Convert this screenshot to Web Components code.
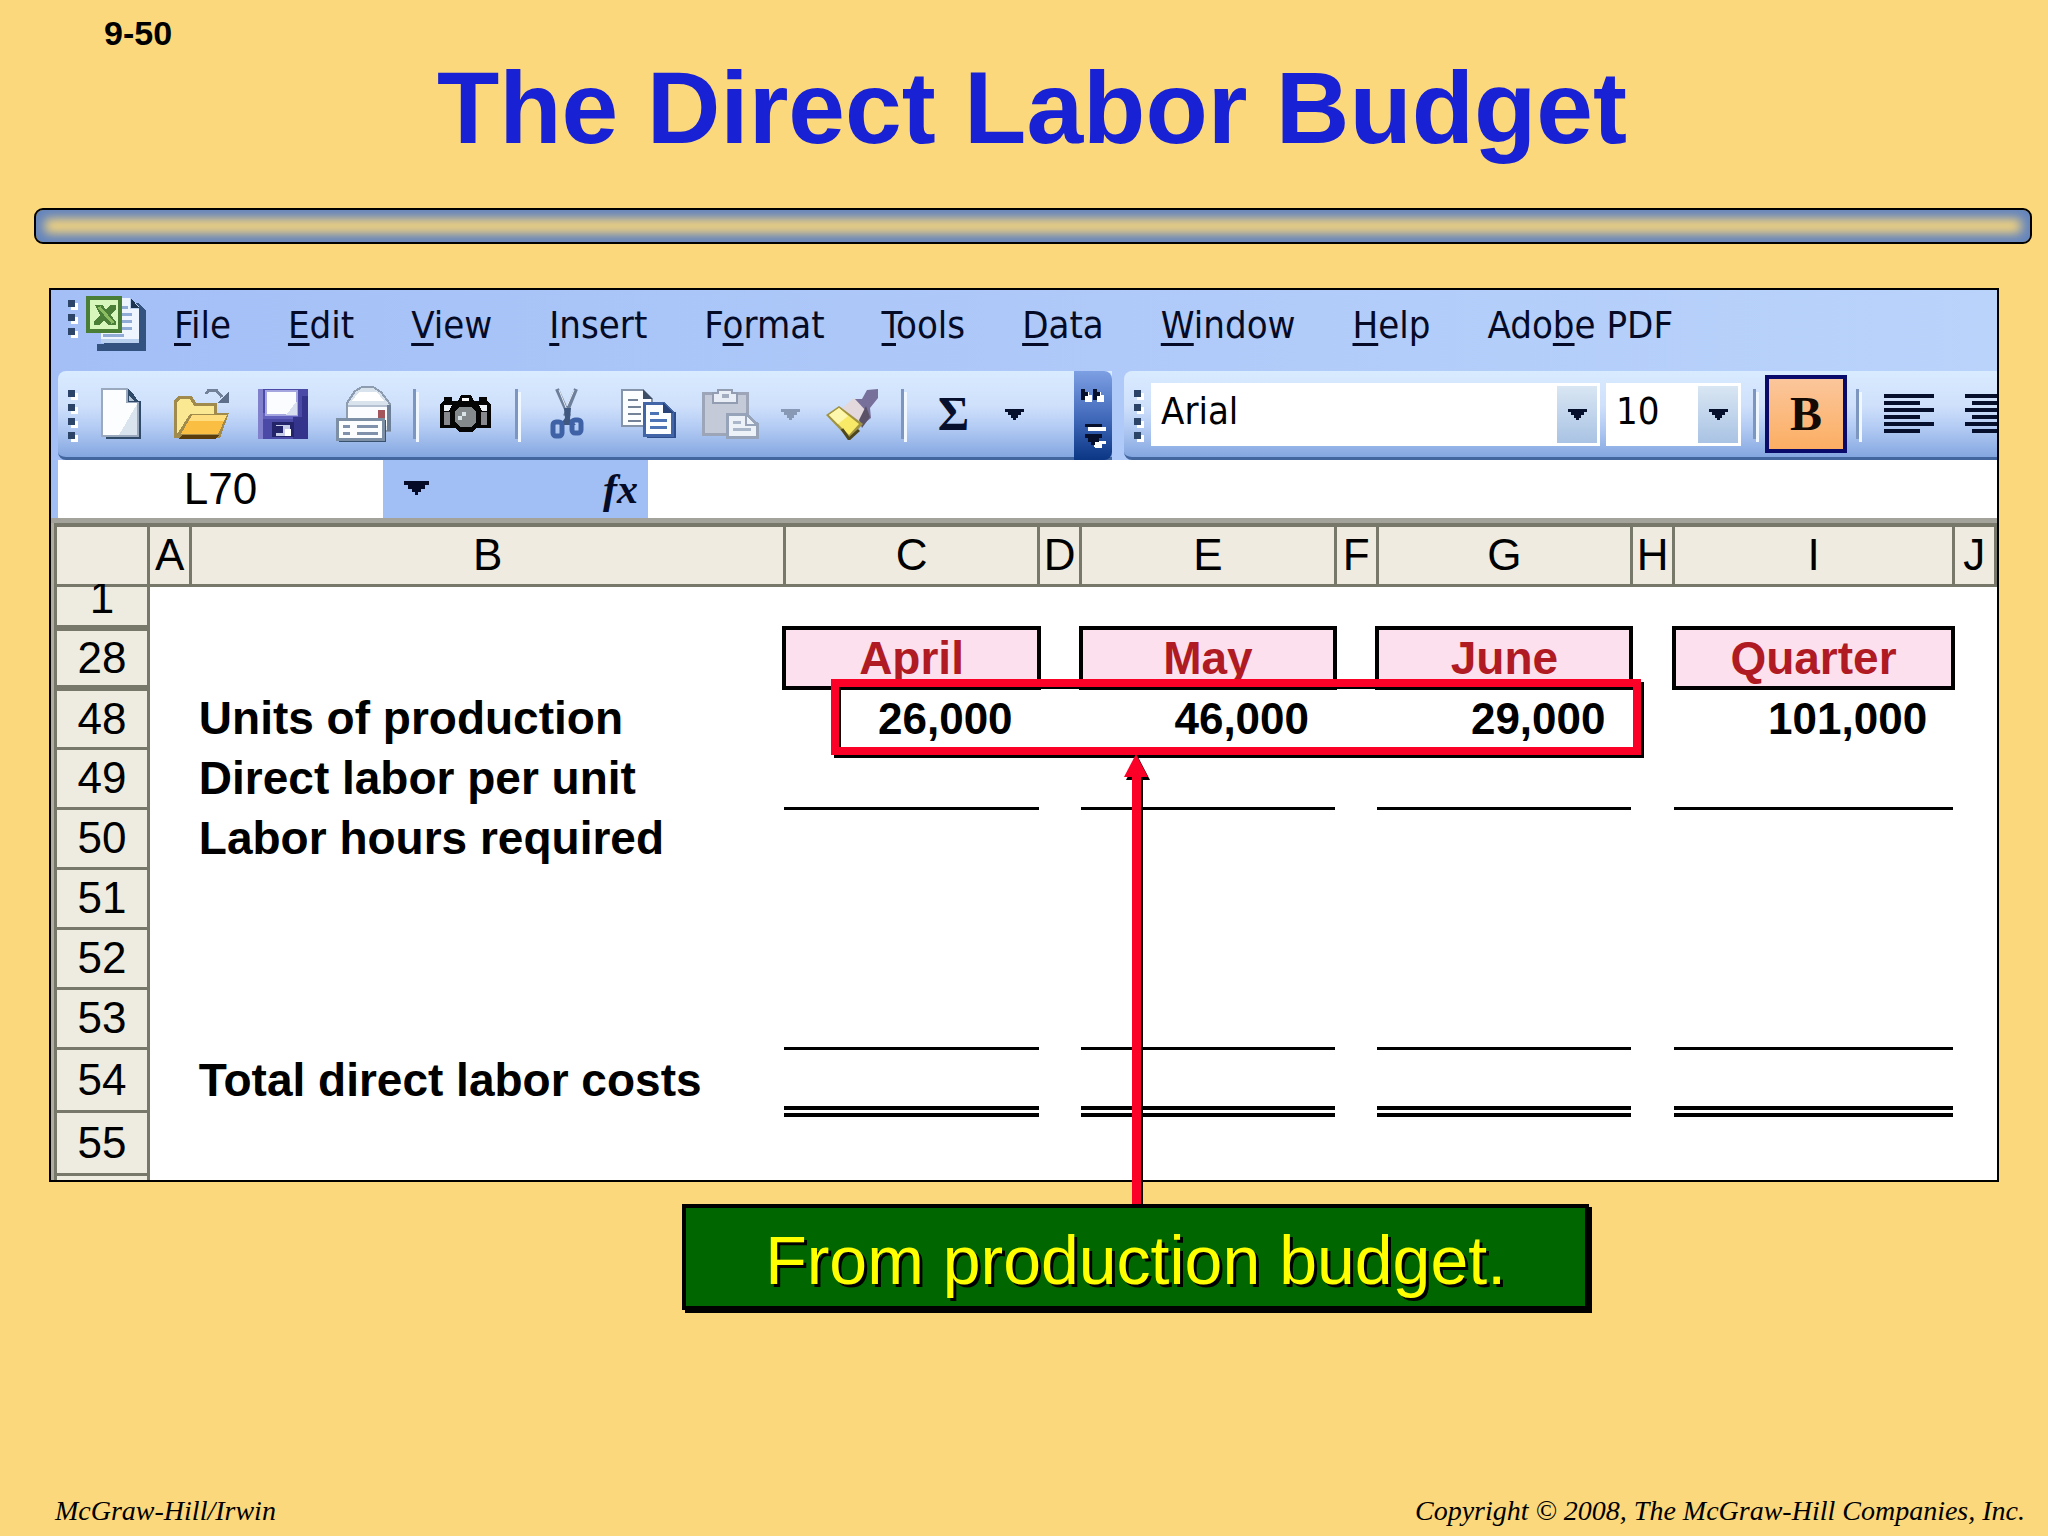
<!DOCTYPE html>

<html lang="en">
	<head>
		<meta charset="utf-8">
		<title>The Direct Labor Budget</title>
		<style>
			body {
				margin: 0;
				background-color: #fbd87b;
				font-family: "Liberation Sans", Arial, sans-serif;
				color: #000;
			}
		</style>
	</head>

	<body>
		<budget-slide number="9-50">
			<span slot="title">The Direct Labor Budget</span>
			<excel-window>
				<menu-bar></menu-bar>
				<tool-bars></tool-bars>
				<formula-bar cell="L70"></formula-bar>
				<work-sheet></work-sheet>
			</excel-window>
			<call-out>From production budget.</call-out>
			<span slot="publisher">McGraw-Hill/Irwin</span>
			<span slot="copyright">Copyright © 2008, The McGraw-Hill Companies, Inc.</span>
		</budget-slide>
	</body>

	<script>
		const UI_FONT = '"DejaVu Sans Condensed", "Noto Sans", sans-serif';

		const ICONS = {
			excel: `<svg width="62" height="58" viewBox="0 0 62 58" shape-rendering="crispEdges">
				<path d="M18 8H52L60 16V56H11V49H18Z" fill="#33527f"/>
				<path d="M15 3H45L53 12V48H15Z" fill="#b9d0ef"/>
				<path d="M15 3H44V14H53V44H15Z" fill="#eef5ff"/>
				<path d="M45 3V13H53Z" fill="#1c3350"/>
				<path d="M34 12H42M34 19H46M34 26H46M34 33H46M17 40H38" stroke="#8fabd6" stroke-width="3"/>
				<rect x="2" y="3" width="32" height="33" fill="#d8f7bd" stroke="#4a7d35" stroke-width="4"/>
				<path d="M9 10H17L20 15L24 10H30V14L25 20L30 27V30H22L18 25L13 30H8V26L14 20Z" fill="#4b7f37"/>
				<path d="M13 12L27 28" stroke="#8dbd63" stroke-width="3"/>
			</svg>`,
			blank: `<svg width="40" height="52" viewBox="0 0 40 52" shape-rendering="crispEdges">
				<path d="M5 47V51H40V13H36V47Z" fill="#2f4a68"/>
				<path d="M1 1H26V14H37V48H1Z" fill="#fbfdff" stroke="#9aa9bd" stroke-width="2"/>
				<path d="M36 16V47H18Z" fill="#d9e4ef"/>
				<path d="M27 1V14H38L33 7Z" fill="#2f4a68"/>
				<path d="M28 8V13H33Z" fill="#b7c6d8"/>
			</svg>`,
			open: `<svg width="58" height="52" viewBox="0 0 58 52" shape-rendering="crispEdges">
				<path d="M1 50V12L5 8H19L23 15H44V25H56L47 50Z" fill="#a08a4c"/>
				<path d="M4 46V14L7 11H17L21 18H41V26H17Z" fill="#fbe893"/>
				<path d="M8 46L19 27H54L45 46Z" fill="#f9be42"/>
				<path d="M19 27H54L51 33H16Z" fill="#fddd7d"/>
				<path d="M9 47H46L43 51H5Z" fill="#5b3d0c"/>
				<path d="M33 6L36 2H43L49 9" fill="none" stroke="#738298" stroke-width="3"/>
				<path d="M56 3V15H44Z" fill="#5d6f8b"/>
			</svg>`,
			save: `<svg width="50" height="50" viewBox="0 0 50 50" shape-rendering="crispEdges">
				<rect width="50" height="50" fill="#4b4aa6"/>
				<path d="M0 0H5V50H0Z" fill="#8080cc"/>
				<path d="M5 24H40V30H5Z" fill="#6260bd"/>
				<path d="M44 7H50V50H35V28H44Z" fill="#35348d"/>
				<rect x="8" y="2" width="31" height="24" fill="#fbfcff" stroke="#a5a5df" stroke-width="2"/>
				<path d="M28 26L39 12V26Z" fill="#d7def0"/>
				<path d="M14 33H36V48H14Z" fill="#24246b"/>
				<path d="M18 36H32V47H18Z" fill="#c9cee8"/>
				<path d="M18 37H25V44H18Z" fill="#24246b"/>
				<path d="M27 40H33V47H27Z" fill="#fff"/>
			</svg>`,
			mail: `<svg width="58" height="58" viewBox="0 0 58 58" shape-rendering="crispEdges">
				<path d="M12 18L20 6L27 2H38L46 7L55 19V46H12Z" fill="#d9e3ee" stroke="#8d9cae" stroke-width="2"/>
				<path d="M17 16L24 7H42L49 16Z" fill="#fff"/>
				<path d="M13 21H53V41H13Z" fill="#fbfcff"/>
				<path d="M13 21H53" stroke="#b4c0cf" stroke-width="2" fill="none"/>
				<rect x="43" y="25" width="7" height="8" fill="#a4545b"/>
				<path d="M54 20V46" stroke="#6c7f96" stroke-width="4"/>
				<path d="M4 53H48V35H51V57H4Z" fill="#36526f"/>
				<rect x="2" y="34" width="46" height="20" fill="#fbfdff" stroke="#7d8fa5" stroke-width="3"/>
				<path d="M8 41H15M8 48H15M22 41H43M22 48H43" stroke="#8092ab" stroke-width="3"/>
			</svg>`,
			camera: `<svg width="52" height="40" viewBox="0 0 52 40" shape-rendering="crispEdges">
				<path d="M0 10L4 7V3H12V7H18L21 1H31L34 7H39V3H47V7L51 10V34H37L32 38H20L15 34H0Z" fill="#050505"/>
				<path d="M22 4H29V7H22Z" fill="#fff"/>
				<path d="M4 11H12L9 17H4ZM39 11H47V17H42Z" fill="#eef3fa"/>
				<path d="M4 18H10V31H4ZM41 18H47V31H41Z" fill="#87898f"/>
				<path d="M19 13H32L36 18V28L31 33H20L15 28V18Z" fill="#84898c"/>
				<path d="M18 22H22V18H26V22H22V26H18Z" fill="#d8e4e8"/>
			</svg>`,
			cut: `<svg width="36" height="52" viewBox="0 0 36 52">
				<path d="M7 1L19 28M26 1L15 28" stroke="#6d7f9a" stroke-width="4"/>
				<path d="M9 2L17 22M24 2L17 18" stroke="#e9eff8" stroke-width="1"/>
				<path d="M14 20H21L20 31L26 37H10L15 30Z" fill="#40587f"/>
				<rect x="3" y="34" width="9" height="14" rx="3" fill="none" stroke="#3f62a7" stroke-width="5"/>
				<rect x="22" y="32" width="9" height="13" rx="3" fill="none" stroke="#3f62a7" stroke-width="5"/>
			</svg>`,
			copy: `<svg width="56" height="50" viewBox="0 0 56 50" shape-rendering="crispEdges">
				<path d="M1 1H22L31 10V37H1Z" fill="#fbfdff" stroke="#8594a8" stroke-width="2"/>
				<path d="M22 1V10H31Z" fill="#3d4e66"/>
				<path d="M7 11H17M7 18H20M7 25H20M7 32H20" stroke="#738297" stroke-width="2"/>
				<path d="M26 45V49H55V23H50V45Z" fill="#2d4c8b"/>
				<path d="M23 14H42L51 23V46H23Z" fill="#fbfdff" stroke="#4165a6" stroke-width="3"/>
				<path d="M42 13V24H52Z" fill="#27437a"/>
				<path d="M29 24H38M29 31H46M29 38H46" stroke="#4c73b5" stroke-width="3"/>
			</svg>`,
			paste: `<svg width="58" height="50" viewBox="0 0 58 50" shape-rendering="crispEdges">
				<path d="M2 4H46V45H2Z" fill="#c5cad8" stroke="#9da6b9" stroke-width="3"/>
				<path d="M12 4H17V1H31V4H36V14H12Z" fill="#e8edf6" stroke="#929db2" stroke-width="2"/>
				<path d="M21 5H28V9H21Z" fill="#a3adc0"/>
				<path d="M26 25H45L56 35V48H26Z" fill="#edf2f9" stroke="#96a3b9" stroke-width="3"/>
				<path d="M45 25V36H56" fill="none" stroke="#96a3b9" stroke-width="2"/>
				<path d="M32 33H40M32 40H50" stroke="#aab6c9" stroke-width="3"/>
			</svg>`,
			brush: `<svg width="56" height="52" viewBox="0 0 56 52">
				<path d="M43 2L54 1V10L46 20L47 30L38 37L25 24L31 11L38 11Z" fill="#77709b"/>
				<path d="M30 10L44 25L37 38L17 21Z" fill="#e3d8dc"/>
				<path d="M42 18L46 29L38 40L35 32Z" fill="#5b5268"/>
				<path d="M15 18L39 36L25 51L2 27Z" fill="#a09342"/>
				<path d="M15 20L35 36L25 47L5 27Z" fill="#f8ea67"/>
				<path d="M15 20L24 28L14 36L5 27Z" fill="#fdf6ad"/>
				<path d="M18 41L25 51L35 42" fill="none" stroke="#4d461c" stroke-width="3"/>
			</svg>`,
			down: `<svg width="19" height="11" viewBox="0 0 19 11" shape-rendering="crispEdges"><path d="M0 0H19V3H16V6H13V9H11V11H8V9H6V6H3V3H0Z" fill="currentColor"/></svg>`,
			more: `<svg width="26" height="62" viewBox="0 0 26 62" shape-rendering="crispEdges">
				<path d="M5 4H9V7H12V14H5ZM17 4H21V7H24V14H17Z" fill="#fff"/>
				<path d="M1 1H5V4H8V8H5V12H1ZM13 1H17V4H20V8H17V12H13Z" fill="#06102c"/>
				<path d="M5 36H22V39H5Z" fill="#06102c"/>
				<path d="M8 39H26V43H8Z" fill="#fff"/>
				<path d="M11 53H26V56H22V60H15Z" fill="#fff"/>
				<path d="M5 46H22V50H19V54H15V57H11V54H8V50H5Z" fill="#06102c"/>
			</svg>`,
			left: `<svg width="50" height="40" viewBox="0 0 50 40" shape-rendering="crispEdges"><path d="M0 2H50M0 9H36M0 16H50M0 23H36M0 30H50M0 37H36" stroke="#06102c" stroke-width="4"/></svg>`,
			center: `<svg width="50" height="40" viewBox="0 0 50 40" shape-rendering="crispEdges"><path d="M0 2H50M7 9H43M0 16H50M7 23H43M0 30H50M7 37H43" stroke="#06102c" stroke-width="4"/></svg>`
		};

		// one column of small squares at the left end of a bar
		function grip(count) {
			return '<span class="grip">' + '<i></i>'.repeat(count) + '</span>';
		}

		const GRIP_STYLE = `
			.grip {
				display: flex;
				flex-direction: column;
				gap: 7px;
				flex: none;
			}
			.grip i {
				width: 7px;
				height: 7px;
				background-color: #2c4468;
				box-shadow: 3px 3px 0 #fff;
			}
		`;

		class BudgetSlide extends HTMLElement {
			constructor() {
				super();

				const shadow = this.attachShadow({ mode: 'open' });
				shadow.innerHTML = `
					<style>
						:host {
							display: flex;
							flex-direction: column;
							min-height: 100vh;
							box-sizing: border-box;
							padding: 14px 0 8px;
						}
						.number {
							padding-left: 104px;
							font-size: 34px;
							font-weight: bold;
							line-height: 38px;
						}
						h1 {
							margin: 0;
							padding-left: 16px;
							font-size: 102px;
							line-height: 112px;
							text-align: center;
							color: #1822d4;
						}
						.rule {
							height: 32px;
							margin: 44px 16px 44px 34px;
							border: 2px solid #000;
							border-radius: 9px;
							background-color: #fbd87b;
							box-shadow: inset 0 0 11px 9px #6384be;
						}
						footer {
							display: flex;
							justify-content: space-between;
							margin-top: auto;
							padding: 0 23px 0 55px;
							font: italic 28px/34px "Liberation Serif", "Times New Roman", serif;
						}
					</style>
					<div class="number"></div>
					<h1><slot name="title"></slot></h1>
					<div class="rule"></div>
					<slot></slot>
					<footer>
						<slot name="publisher"></slot>
						<slot name="copyright"></slot>
					</footer>
				`;
				shadow.querySelector('.number').textContent = this.getAttribute('number');
			}
		}
		customElements.define('budget-slide', BudgetSlide);

		class ExcelWindow extends HTMLElement {
			constructor() {
				super();

				this.attachShadow({ mode: 'open' }).innerHTML = `
					<style>
						:host {
							display: block;
							margin: 0 49px;
							border: 2px solid #000;
							background: linear-gradient(90deg, #a3bff6, #b9d3fb);
						}
					</style>
					<slot></slot>
				`;
			}
		}
		customElements.define('excel-window', ExcelWindow);

		class MenuBar extends HTMLElement {
			constructor() {
				super();

				// the underscore stands before the access key
				const items = ['_File', '_Edit', '_View', '_Insert', 'F_ormat', '_Tools', '_Data', '_Window', '_Help', 'Ado_be PDF'];

				this.attachShadow({ mode: 'open' }).innerHTML = `
					<style>
						:host {
							display: flex;
							align-items: flex-start;
							height: 81px;
							padding-left: 17px;
						}
						${GRIP_STYLE}
						.grip {
							padding-top: 10px;
						}
						.logo {
							margin: 5px 0 0 11px;
						}
						.logo svg {
							display: block;
						}
						nav {
							display: flex;
							gap: 57px;
							margin: 11px 0 0 26px;
						}
						button {
							padding: 0;
							border: 0;
							background: none;
							font: 38px/48px ${UI_FONT};
							color: #050a26;
							white-space: nowrap;
						}
						u {
							text-decoration-thickness: 3px;
							text-underline-offset: 5px;
							text-decoration-skip-ink: none;
						}
					</style>
					${grip(3)}
					<span class="logo">${ICONS.excel}</span>
					<nav>${items.map(t => '<button type="button">' + t.replace(/_(.)/, '<u>$1</u>') + '</button>').join('')}</nav>
				`;
			}
		}
		customElements.define('menu-bar', MenuBar);

		class ToolBars extends HTMLElement {
			constructor() {
				super();

				const tool = (name, label) => `<button type="button" aria-label="${label}">${ICONS[name]}</button>`;
				const arrow = (label) => `<button type="button" class="arrow" aria-label="${label}">${ICONS.down}</button>`;
				const sep = '<span class="sep"></span>';

				this.attachShadow({ mode: 'open' }).innerHTML = `
					<style>
						:host {
							display: flex;
							gap: 12px;
							height: 89px;
							padding-left: 7px;
						}
						.bar {
							display: flex;
							align-items: center;
							box-sizing: border-box;
							height: 89px;
							padding-left: 10px;
							border-bottom: 3px solid #43669f;
							border-radius: 8px 0 0 8px;
							background: linear-gradient(#d9ebff, #cfe0fb 40%, #b4ccf4 65%, #84a6e0);
						}
						.format {
							flex: 1;
							min-width: 0;
							overflow: hidden;
						}
						${GRIP_STYLE}
						.standard .grip {
							margin-right: 5px;
						}
						.format .grip {
							margin-right: 10px;
						}
						button {
							display: flex;
							justify-content: center;
							align-items: center;
							flex: none;
							width: 81px;
							height: 78px;
							padding: 0;
							border: 0;
							background: none;
							color: #06102c;
						}
						button svg {
							flex: none;
						}
						.arrow {
							width: 41px;
						}
						.dim {
							color: #8799b4;
						}
						.glyph {
							font: bold 48px/56px "Liberation Serif", "Times New Roman", serif;
						}
						.bold {
							width: 82px;
							box-sizing: border-box;
							border: 4px solid #0a0a6b;
							background: linear-gradient(#fbc69b, #fcae63);
							color: #140a04;
						}
						.sep {
							flex: none;
							width: 3px;
							height: 50px;
							margin: 0 9px;
							background-color: #7c96c0;
							box-shadow: 3px 3px 0 #f0f7ff;
						}
						.more {
							box-sizing: border-box;
							width: 38px;
							height: 89px;
							margin: 0 0 -3px 39px;
							padding-top: 6px;
							border-radius: 0 8px 8px 0;
							background: linear-gradient(#7d9fe3, #3f67b8 55%, #0a3684);
						}
						.drop {
							display: grid;
							grid-template-columns: 1fr 40px;
							flex: none;
							box-sizing: border-box;
							height: 63px;
							margin-right: 6px;
							padding: 3px;
							background-color: #fff;
						}
						.drop select {
							grid-area: 1 / 1 / 2 / 3;
							width: 100%;
							padding: 0 46px 6px 7px;
							border: 0;
							background: none;
							font: 38px/48px ${UI_FONT};
							color: #000;
							appearance: none;
						}
						.drop span {
							grid-area: 1 / 2;
							display: flex;
							justify-content: center;
							align-items: center;
							background: linear-gradient(#d9e6f3, #a9c3e4);
							color: #06102c;
							pointer-events: none;
						}
						.face {
							width: 449px;
						}
						.size {
							width: 135px;
							margin-right: 3px;
						}
					</style>
					<div class="bar standard">
						${grip(4)}
						${tool('blank', 'New')}${tool('open', 'Open')}${tool('save', 'Save')}${tool('mail', 'E-mail')}
						${sep}${tool('camera', 'Camera')}${sep}
						${tool('cut', 'Cut')}${tool('copy', 'Copy')}${tool('paste', 'Paste')}
						<button type="button" class="arrow dim" aria-label="Paste options">${ICONS.down}</button>
						${tool('brush', 'Format Painter')}${sep}
						<button type="button" class="glyph" aria-label="AutoSum">Σ</button>
						${arrow('More functions')}
						<button type="button" class="more" aria-label="Toolbar options">${ICONS.more}</button>
					</div>
					<div class="bar format">
						${grip(4)}
						<div class="drop face"><select aria-label="Font"><option>Arial</option></select><span>${ICONS.down}</span></div>
						<div class="drop size"><select aria-label="Font size"><option>10</option></select><span>${ICONS.down}</span></div>
						${sep}<button type="button" class="glyph bold" aria-label="Bold">B</button>${sep}
						${tool('left', 'Align left')}${tool('center', 'Center')}
					</div>
				`;
			}
		}
		customElements.define('tool-bars', ToolBars);

		class FormulaBar extends HTMLElement {
			constructor() {
				super();

				const shadow = this.attachShadow({ mode: 'open' });
				shadow.innerHTML = `
					<style>
						:host {
							display: flex;
							height: 58px;
							padding-left: 7px;
							border-bottom: 5px solid #a3a39b;
							background-color: #a1bef5;
						}
						input {
							box-sizing: border-box;
							border: 0;
							padding: 0;
							background-color: #fff;
							font: 44px/56px "Liberation Sans", Arial, sans-serif;
							color: #000;
						}
						.name {
							width: 325px;
							text-align: center;
						}
						.formula {
							flex: 1;
							min-width: 0;
							padding: 0 8px;
						}
						button {
							padding: 0;
							border: 0;
							background: none;
							color: #050a26;
						}
						.open {
							width: 67px;
						}
						.open svg {
							width: 25px;
							height: 14px;
						}
						.fx {
							width: 198px;
							padding-right: 10px;
							font: italic bold 42px/56px "Liberation Serif", "Times New Roman", serif;
							text-align: right;
						}
					</style>
					<input class="name" type="text" aria-label="Name box">
					<button type="button" class="open" aria-label="Named cells">${ICONS.down}</button>
					<button type="button" class="fx">fx</button>
					<input class="formula" type="text" aria-label="Formula">
				`;
				shadow.querySelector('.name').value = this.getAttribute('cell');
			}
		}
		customElements.define('formula-bar', FormulaBar);

		class WorkSheet extends HTMLElement {
			constructor() {
				super();

				const shadow = this.attachShadow({ mode: 'open' });

				const style = document.createElement('style');
				style.textContent = `
					:host {
						display: block;
						position: relative;
						padding-left: 3px;
						background-color: #b0aea2;
					}
					table {
						width: 100%;
						table-layout: fixed;
						border-collapse: collapse;
						background-color: #fff;
					}
					.row {
						width: 93px;
					}
					.label {
						width: 30.6%;
					}
					.month {
						width: 13.1%;
					}
					.quarter {
						width: 14.4%;
					}
					th, td {
						height: 60px;
						box-sizing: border-box;
						padding: 0;
						font-size: 46px;
						line-height: 48px;
						white-space: nowrap;
					}
					thead th, tbody th {
						border: 3px solid #77776a;
						background-color: #efebe0;
						font-size: 44px;
						font-weight: normal;
						text-align: center;
					}
					thead th {
						position: relative;
						z-index: 1;
						border-top-width: 4px;
					}
					tbody th {
						background-color: #eeece0;
					}
					td {
						font-weight: bold;
						text-align: left;
					}
					td.text {
						padding-left: 8px;
					}
					td.value {
						padding-right: 26px;
						font-size: 44px;
						text-align: right;
					}
					td.head {
						border: 4px solid #000;
						background-color: #fde0ee;
						color: #b01a22;
						text-align: center;
					}
					td.line {
						border-bottom: 3px solid #000;
					}
					td.total {
						border-bottom: 11px double #000;
					}
					/* scrolled under the column letters, so only its lower part is left */
					.first th, .first td {
						height: 43px;
						line-height: 22px;
						vertical-align: top;
					}
					.first th, .r28 th {
						border-bottom-width: 6px;
					}
					.r54 th, .r54 td, .r55 th, .r55 td {
						height: 63px;
					}
					.last th, .last td {
						height: 6px;
						border-bottom: 0;
					}
					.mark {
						position: absolute;
						top: 156px;
						left: 40.1%;
						width: 41.6%;
						height: 76px;
						box-sizing: border-box;
						border: 8px solid #fc0128;
						box-shadow: 3px 3px 0 #000, inset 2px 2px 0 #000;
					}
					.arrow {
						position: absolute;
						top: 231px;
						left: 55.1%;
						width: 30px;
						height: 450px;
						z-index: 1;
					}
				`;

				const rows = [
					{ no: '1', cls: 'first' },
					{ no: '28', cls: 'r28', kind: 'head', values: ['April', 'May', 'June', 'Quarter'] },
					{ no: '48', text: 'Units of production', kind: 'value', values: ['26,000', '46,000', '29,000', '101,000'] },
					{ no: '49', text: 'Direct labor per unit', kind: 'line' },
					{ no: '50', text: 'Labor hours required' },
					{ no: '51' },
					{ no: '52' },
					{ no: '53', kind: 'line' },
					{ no: '54', cls: 'r54', text: 'Total direct labor costs', kind: 'total' },
					{ no: '55', cls: 'r55' },
					{ no: '', cls: 'last' }
				];

				const table = document.createElement('table');
				table.innerHTML = `
					<colgroup>
						<col class="row"><col><col class="label">
						<col class="month"><col><col class="month"><col><col class="month"><col>
						<col class="quarter"><col>
					</colgroup>
					<thead><tr><th></th>${[...'ABCDEFGHIJ'].map(c => '<th scope="col">' + c + '</th>').join('')}</tr></thead>
				`;

				const body = table.createTBody();
				rows.forEach((row) => {
					const tr = body.insertRow();
					tr.className = row.cls || '';
					const cells = [0, 1, 2, 3].map((i) => {
						const value = row.values ? row.values[i] : '';
						return '<td class="' + (row.kind || '') + '">' + value + '</td><td></td>';
					});
					tr.innerHTML = '<th scope="row">' + row.no + '</th><td></td><td class="text">' + (row.text || '') + '</td>' + cells.join('');
				});

				const mark = document.createElement('div');
				mark.classList.add('mark');

				const arrow = document.createElement('div');
				arrow.classList.add('arrow');
				arrow.innerHTML = `<svg width="30" height="100%">
					<path d="M15 3L27 26H3Z" fill="#000"/>
					<rect x="12" y="20" width="8" height="100%" fill="#000"/>
					<path d="M13 0L25 23H1Z" fill="#fc0128"/>
					<rect x="9" y="20" width="9" height="100%" fill="#fc0128"/>
				</svg>`;

				shadow.append(style, table, mark, arrow);
			}
		}
		customElements.define('work-sheet', WorkSheet);

		class CallOut extends HTMLElement {
			constructor() {
				super();

				this.attachShadow({ mode: 'open' }).innerHTML = `
					<style>
						:host {
							display: block;
							box-sizing: border-box;
							width: 44.3%;
							margin: 22px 0 0 33.3%;
							padding: 14px 0 8px;
							border: 4px solid #000;
							background-color: #006600;
							box-shadow: 3px 3px 0 #000;
							font-size: 68px;
							line-height: 76px;
							text-align: center;
							text-shadow: 3px 3px 0 #000;
							color: #ffff00;
						}
					</style>
					<slot></slot>
				`;
			}
		}
		customElements.define('call-out', CallOut);
	</script>
</html>
